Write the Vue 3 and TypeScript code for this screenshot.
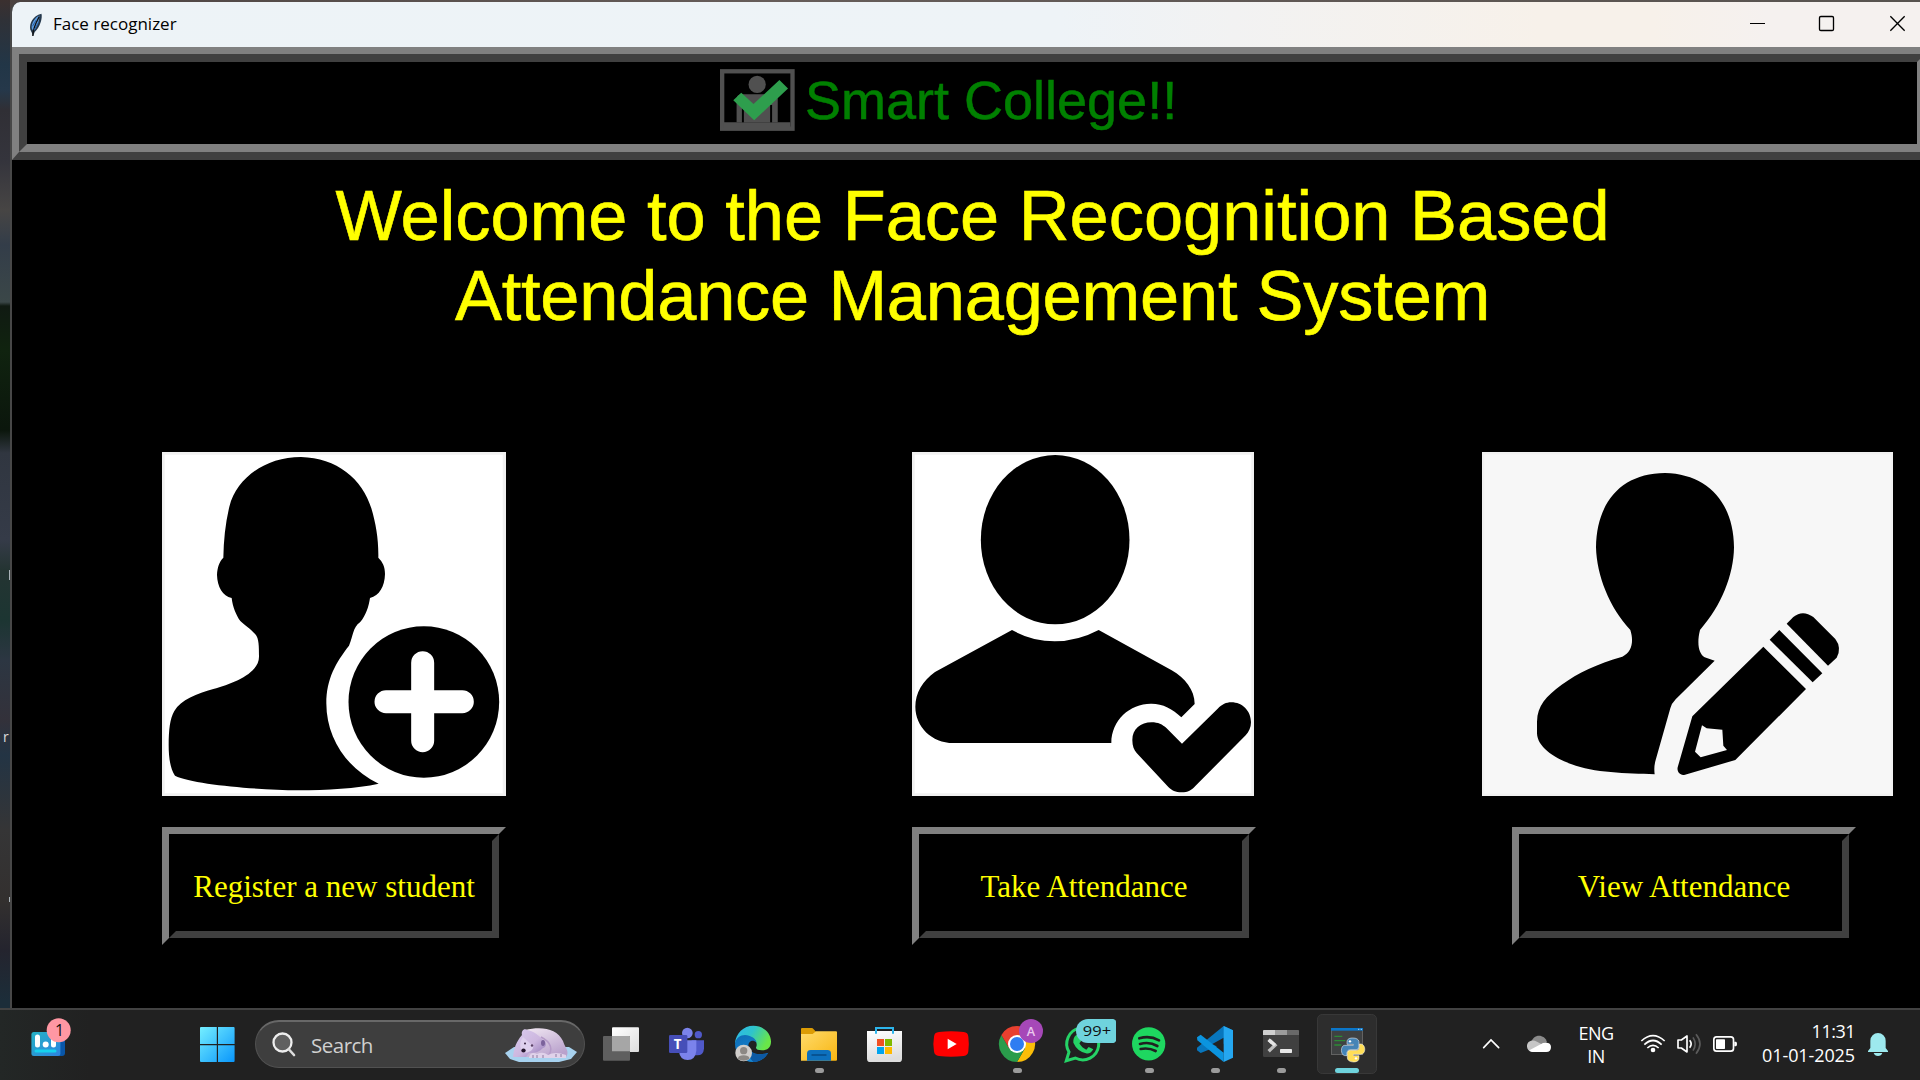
<script setup lang="ts">
interface TaskItem {
  id: string
  box: string
  running: boolean
}

const tasks: TaskItem[] = [
  { id: 'taskview', box: '-6 30 198 210', running: false },
  { id: 'teams', box: '192 30 198 210', running: false },
  { id: 'edge', box: '390 30 198 210', running: false },
  { id: 'files', box: '588 30 198 210', running: true },
  { id: 'store', box: '786 30 198 210', running: false },
  { id: 'youtube', box: '984 30 198 210', running: false },
  { id: 'chrome', box: '-48 30 198 210', running: true },
  { id: 'whatsapp', box: '150 30 198 210', running: false },
  { id: 'spotify', box: '348 30 198 210', running: true },
  { id: 'vscode', box: '546 30 198 210', running: true },
  { id: 'terminal', box: '744 30 198 210', running: true },
  { id: 'python', box: '942 30 198 210', running: false },
]
</script>

<template>
  <div class="screen">
    <div class="workspace">
      <aside class="desktop"><span class="d1"></span><span class="dr">r</span><span class="d2"></span></aside>
      <main class="window">
        <header class="titlebar">
          <svg class="feather" viewBox="84 28 50 80">
            <path d="M91 82C88 64 98 40 126 33C130 44 122 76 105 90L100 103L96 92Z" fill="#25384c" />
            <path d="M96 80C92 65 106 43 120 38C119 55 113 76 101 87Z" fill="#5d9ce0" />
            <path d="M99 102C99 84 107 64 119 42" fill="none" stroke="#111" stroke-width="4" />
            <path d="M98 72l12-20M103 84l14-24" stroke="#255b9f" stroke-width="3" />
          </svg>
          <span class="title">Face recognizer</span>
          <svg class="controls" viewBox="420 0 540 135">
            <path d="M450 64.5h45" stroke="#000" stroke-width="3" />
            <rect x="658.500" y="43.500" width="42" height="42" rx="4" fill="none" stroke="#000" stroke-width="4" />
            <path d="M871 43l43 43M914 43l-43 43" stroke="#000" stroke-width="4" />
          </svg>
        </header>

        <section class="banner">
          <div class="banner-in">
            <svg class="logo" viewBox="60 87 226 186">
              <rect x="66.500" y="93.500" width="212" height="173" fill="none" stroke="#505050" stroke-width="13" />
              <path d="M72 247H272V264H72z" fill="#505050" />
              <circle cx="172" cy="133" r="26" fill="#505050" />
              <path d="M110 247V178Q110 163 126 163H218Q234 163 234 178V247z" fill="#505050" />
              <path d="M129 195V247M214 195V247" stroke="#000" stroke-width="6" />
              <path d="M100 181L124 158L161 192L239 120L265 145L163 241Z" fill="#2e9e4d" />
            </svg>
            <span>Smart College!!</span>
          </div>
        </section>

        <h1>Welcome to the Face Recognition Based<br /><span class="second">Attendance Management System</span></h1>

        <section class="choices">
          <div class="choice">
            <svg class="art" width="344" height="344" viewBox="36 36 1032 1032">
              <rect x="36" y="36" width="1032" height="1032" fill="#f1f1f1" />
              <rect x="44" y="44" width="1014" height="1016" fill="#fff" />
              <path d="M453 51C560 54 637 116 664 205C678 252 686 300 685 353C698 366 705 380 705 402C704 440 688 467 660 474C656 500 648 526 630 547C608 562 610 588 597 617C558 667 529 716 529 790C529 895 590 985 686 1031C620 1045 530 1051 445 1051C320 1049 130 1034 75 1007C60 985 56 950 56 915C56 870 60 835 73 813C92 780 142 760 190 747C250 730 327 700 327 650C327 620 327 595 316 583C300 565 284 556 271 543C258 525 248 500 245 474C218 469 202 440 201 405C202 382 208 365 220 353C221 300 226 250 238 200C260 115 345 51 453 51Z" />
              <ellipse cx="821.500" cy="786" rx="226" ry="227" />
              <path d="M818 668V902M708 785H937" stroke="#fff" stroke-width="69" stroke-linecap="round" />
            </svg>
            <button class="action" type="button"><span>Register a new student</span></button>
          </div>
          <div class="choice">
            <svg class="art" width="342" height="344" viewBox="36 36 1026 1032">
              <rect x="36" y="36" width="1026" height="1032" fill="#f1f1f1" />
              <rect x="44" y="44" width="1010" height="1016" fill="#fff" />
              <ellipse cx="465.500" cy="299" rx="223" ry="254" />
              <path d="M336 570Q396 604 464 604Q532 604 596 570L815 691C855 714 884 750 884 792L844 832C818 806 786 790 752 791C690 791 634 840 634 909H160C95 909 46 860 46 800C46 760 68 722 105 696Z" />
              <path d="M697 900C697 867 722 847 755 847C774 847 787 853 800 865L846 911L953 806C967 793 978 787 994 787C1027 787 1053 813 1053 847C1053 863 1047 875 1037 886L886 1038C875 1050 864 1057 845 1057C826 1057 816 1051 805 1041L710 939C702 930 697 918 697 900Z" />
            </svg>
            <button class="action" type="button"><span>Take Attendance</span></button>
          </div>
          <div class="choice wide">
            <svg class="art" width="411" height="344" viewBox="36 36 1233 1032">
              <rect x="36" y="36" width="1234" height="1032" fill="#f1f1f1" />
              <rect x="43" y="43" width="1219" height="1018" fill="#f7f7f7" />
              <path d="M585 99C715 102 791 190 792 322C791 405 754 498 690 570C680 610 686 640 704 652L734 662L617 778Q605 790 601 805L557 960Q551 980 554 1003C470 1001 370 998 305 973C250 953 202 920 201 880V845C202 795 228 770 275 734C325 698 380 672 457 650C486 635 492 605 481 570C418 503 380 405 378 322C380 185 455 100 585 99Z" />
              <path d="M880 620L1008 747L796 960L645 1004C631 1008 620 996 623 982L667 829ZM696 856L675 935L692 952L771 930L760 917L757 869L710 865Z" fill-rule="evenodd" />
              <path d="M928 570L1057 700L1028 727L899 599Z" />
              <path d="M950 551L970 531Q998 508 1030 531L1096 597Q1116 624 1100 653L1074 677Z" />
            </svg>
            <button class="action" type="button"><span>View Attendance</span></button>
          </div>
        </section>
      </main>
    </div>

    <footer class="taskbar">
      <svg class="widget" width="100" height="70" viewBox="0 1010 100 70">
        <defs>
          <linearGradient id="wg" x2="1" y2="1"><stop stop-color="#25b2c5" /><stop offset="1" stop-color="#2e83e0" /></linearGradient>
        </defs>
        <rect x="52" y="1033" width="13" height="23" rx="3" fill="#0956a8" />
        <rect x="31.400" y="1032" width="29" height="24" rx="2.500" fill="url(#wg)" />
        <path d="M37.500 1037V1045M53.500 1039V1045" stroke="#fff" stroke-width="5" stroke-linecap="round" />
        <circle cx="45.700" cy="1044.500" r="3" fill="#fff" />
        <path d="M36 1051H55" stroke="#15d2ee" stroke-width="3" stroke-linecap="round" />
        <circle cx="58.700" cy="1030.300" r="12" fill="#ff97a3" />
        <text x="59.500" y="1036" text-anchor="middle" class="badge-num">1</text>
      </svg>
      <svg class="start" width="66" height="70" viewBox="184 1010 66 70">
        <defs><linearGradient id="win" x2="1" y2="1"><stop stop-color="#75efff" /><stop offset="1" stop-color="#0996fb" /></linearGradient></defs>
        <path d="M200 1028q0-1 1-1h15.800v17H200zM218 1027h15.600q1 0 1 1v16H218zM200 1045.200h16.800V1062H201q-1 0-1-1zM218 1045.200h16.600V1061q0 1-1 1H218z" fill="url(#win)" />
      </svg>
      <div class="search">
        <svg class="glass" width="24" height="26" viewBox="0 0 24 26"><circle cx="10.500" cy="10.500" r="9" fill="#606060" stroke="#eee" stroke-width="2.300" /><path d="M17 17.500L22 23" stroke="#ddd" stroke-width="2.600" stroke-linecap="round" /></svg>
        <span class="search-label">Search</span>
        <svg class="bear" width="72" height="34" viewBox="0 0 72 34">
          <defs><linearGradient id="fur" x2="1" y2="1"><stop stop-color="#d9cbef" /><stop offset=".55" stop-color="#cdb7df" /><stop offset="1" stop-color="#8e74b5" /></linearGradient>
            <linearGradient id="body" x2=".7" y2="1"><stop stop-color="#f6eef6" /><stop offset="1" stop-color="#b9a1cc" /></linearGradient></defs>
          <path d="M0 25L9 19H64L72 24L66 31L54 34H14L5 31Z" fill="#a8d2ef" />
          <path d="M20 2C36-2 52 0 58 13C60 20 65 23 61 29H12Z" fill="url(#body)" />
          <path d="M8 29C9 20 11 14 17 7C16 3 19 0 22 2C28 3 34 7 38 12C42 13 42 19 38 20C34 24 31 25 24 25L21 29Z" fill="url(#fur)" />
          <path d="M18 9C14 14 15 20 17 24C23 26 29 22 28 18" fill="#ded0ee" />
          <path d="M36 9C46 14 49 22 42 29" fill="none" stroke="#b59bc8" stroke-width="1.500" />
          <ellipse cx="18.500" cy="22.500" rx="2.200" ry="2" fill="#24152d" />
          <circle cx="20" cy="15.500" r="1" fill="#37243f" /><circle cx="27" cy="17.500" r="1.200" fill="#5b4266" />
          <ellipse cx="38" cy="15" rx="2" ry="3" fill="#7b629b" />
          <path d="M24 29Q26 23 32 26Q38 23 43 27Q50 23 61 27V30H24z" fill="#e0d2ea" />
          <path d="M28 27v3M32 27v3M38 27v3M51 26v3M56 26v3" stroke="#7a6590" stroke-width=".8" />
        </svg>
      </div>

      <nav class="tasks">
        <div v-for="t in tasks" :key="t.id" class="task">
          <svg width="66" height="70" :viewBox="t.box">
            <g v-if="t.id === 'taskview'">
              <defs><linearGradient id="tv" x2="1" y2="1"><stop stop-color="#fff" /><stop offset="1" stop-color="#ddd" /></linearGradient></defs>
              <rect x="66" y="82" width="81" height="74" rx="3" fill="url(#tv)" />
              <rect x="39" y="108" width="81" height="74" rx="3" fill="#5f5f5f" />
              <path d="M66 108H117Q120 108 120 111V154H66z" fill="#a6a6a6" />
            </g>
            <g v-else-if="t.id === 'teams'">
              <circle cx="325" cy="104" r="11" fill="#5059c9" />
              <path d="M305 121H342V146Q340 166 322 166H305z" fill="#5059c9" />
              <circle cx="292" cy="99" r="16" fill="#7b83eb" />
              <path d="M267 121H319V152Q316 180 293 180T267 155z" fill="#7b83eb" />
              <rect x="237" y="105" width="55" height="54" rx="4" fill="#464eb8" />
              <text x="263" y="147" text-anchor="middle" class="teams-t">T</text>
            </g>
            <g v-else-if="t.id === 'edge'">
              <defs>
                <linearGradient id="eg1" x2="1" y2=".4"><stop stop-color="#2db8ed" /><stop offset=".5" stop-color="#2fc4cb" /><stop offset="1" stop-color="#69e648" /></linearGradient>
                <linearGradient id="eg2" x2=".6" y2="1"><stop stop-color="#0f6cb5" /><stop offset="1" stop-color="#168bd8" /></linearGradient>
              </defs>
              <path d="M435 130C437 100 461 77 490 77C520 77 543 99 543 125C543 142 532 151 516 151C503 151 495 147 499 140C503 130 496 117 482 112Q455 106 435 130Z" fill="url(#eg1)" />
              <path d="M435 132C438 108 460 101 477 107C493 112 499 121 500 128C488 116 475 124 475 137C475 160 502 169 535 158C522 178 506 186 489 186C459 186 435 162 435 132Z" fill="url(#eg2)" />
              <path d="M476 130C472 160 503 169 535 158C524 177 507 186 490 186C480 176 471 156 476 130Z" fill="#0c59a4" />
              <circle cx="461" cy="159" r="25" fill="#d1cecb" />
              <circle cx="461" cy="152" r="11" fill="#8c8884" />
              <path d="M444 177V174Q446 166 461 166T478 174V177Q461 188 444 177Z" fill="#8c8884" />
            </g>
            <g v-else-if="t.id === 'files'">
              <defs><linearGradient id="fo" x2="1" y2="1"><stop stop-color="#ffdb6b" /><stop offset="1" stop-color="#f8b511" /></linearGradient></defs>
              <path d="M633 87Q633 84 636 84H665Q668 84 671 88L678 95V110H633z" fill="#dc9c05" />
              <path d="M633 102H668L678 94H738Q741 94 741 97V179Q741 182 738 182H633z" fill="url(#fo)" />
              <path d="M651 182V160Q652 150 662 150H713Q722 150 723 160V182z" fill="#0d70bd" />
              <path d="M666 165H708" stroke="#064985" stroke-width="4" stroke-linecap="round" />
            </g>
            <g v-else-if="t.id === 'store'">
              <defs><linearGradient id="st" y2="1" x2=".2"><stop stop-color="#fff" /><stop offset="1" stop-color="#ddd" /></linearGradient></defs>
              <path d="M831 93H936V176Q936 186 926 186H841Q831 186 831 176z" fill="url(#st)" />
              <path d="M858 101V84H909V101" fill="none" stroke="#2cb5ec" stroke-width="6" />
              <path d="M861 117h21v21h-21z" fill="#f25022" /><path d="M885 117h21v21h-21z" fill="#7fba00" />
              <path d="M861 141h21v21h-21z" fill="#00a4ef" /><path d="M885 141h21v21h-21z" fill="#ffb900" />
            </g>
            <g v-else-if="t.id === 'youtube'">
              <path d="M1047 96Q1083 92 1121 96Q1134 97 1135 110Q1138 132 1135 154Q1134 167 1121 168Q1083 172 1047 168Q1033 167 1032 154Q1028 132 1032 110Q1033 97 1047 96Z" fill="#f00" />
              <path d="M1073 116V148L1100 132Z" fill="#fff" />
            </g>
            <g v-else-if="t.id === 'chrome'">
              <path d="M51 132L74.400 145.500L51 186A54 54 0 0 0 97.800 105H51Z" fill="#fbbd08" />
              <path d="M51 132L27.600 145.500L4.200 105A54 54 0 0 0 51 186L74.400 145.500Z" fill="#2a9c4b" />
              <path d="M27.600 145.500L4.200 105A54 54 0 0 1 97.800 105H51Z" fill="#e8402f" />
              <circle cx="51" cy="132" r="27" fill="#fff" /><circle cx="51" cy="132" r="21" fill="#2f7df2" />
              <circle cx="93" cy="93" r="36" fill="#a648b8" />
              <text x="93" y="107" text-anchor="middle" class="avatar-a">A</text>
            </g>
            <g v-else-if="t.id === 'whatsapp'">
              <path d="M199 182L207 156A48 48 0 1 1 226 174Z" fill="none" stroke="#25d366" stroke-width="9" />
              <path d="M230 106Q237 101 242 112L246 122L240 130Q248 144 261 149L268 141L282 148Q273 163 260 160Q233 153 222 128Q221 113 230 106Z" fill="#25d366" transform="translate(-2 0)" />
              <path d="M264 57H340Q348 59 348 64V122Q346 129 336 129H264A36 36 0 0 1 264 57Z" fill="#6fd3dd" />
              <text x="291" y="109" text-anchor="middle" textLength="85" lengthAdjust="spacingAndGlyphs" class="badge-big">99+</text>
            </g>
            <g v-else-if="t.id === 'spotify'">
              <circle cx="446" cy="131.500" r="50" fill="#1ed760" />
              <path d="M418 115Q450 106 477 121M420 132Q448 124 472 138M422 147Q446 142 467 153" fill="none" stroke="#202020" stroke-width="8" stroke-linecap="round" />
            </g>
            <g v-else-if="t.id === 'vscode'">
              <path d="M671 78L699 91V120L602 159L591 151V143Z" fill="#0876bd" />
              <path d="M591 112L602 104L671 158V186L592 121Z" fill="#0b94df" />
              <path d="M671 113L637 132L671 151Z" fill="#222" />
              <path d="M671 78L699 91V173L671 186Z" fill="#25a7f0" />
            </g>
            <g v-else-if="t.id === 'terminal'">
              <rect x="789" y="90" width="108" height="81" rx="4" fill="#404040" />
              <path d="M789 105V93Q789 90 792 90H825V105z" fill="#cfcfcf" /><path d="M825 90H861V105H825z" fill="#9c9c9c" /><path d="M861 90H894Q897 90 897 93V105H861z" fill="#696969" />
              <path d="M806 119L825 136L806 154" fill="none" stroke="#bdbdbd" stroke-width="10" />
              <path d="M806 119L825 136" stroke="#e4e4e4" stroke-width="10" />
              <rect x="840" y="147" width="36" height="12" rx="2" fill="#e8e8e8" />
            </g>
            <g v-else>
              <rect x="952.500" y="43.500" width="177" height="177" rx="14" fill="#2d2d2d" stroke="#383838" stroke-width="3" />
              <rect x="994.500" y="85.500" width="93" height="78" fill="#3f4142" stroke="#626262" stroke-width="3" />
              <path d="M993 84H1089V92H993z" fill="#0b76c8" />
              <path d="M1074 88h4m4 0h4" stroke="#8fc5ea" stroke-width="4" />
              <path d="M1003 109H1027M1003 122H1036M1003 135H1024" stroke="#2c8a35" stroke-width="4" />
              <g stroke="#fff" stroke-width="1.500">
                <path d="M1058 114C1044 114 1041 120 1041 127V133H1060V136H1034C1021 136 1021 165 1034 167H1041V157Q1042 149 1051 149H1069Q1077 148 1077 140V125Q1075 114 1058 114Z" fill="#4584b6" />
                <path d="M1060 186C1074 186 1077 180 1077 173V167H1060V163H1083C1098 162 1098 135 1084 132H1078V143Q1077 151 1068 151H1050Q1042 152 1042 160V174Q1043 185 1060 186Z" fill="#ffde57" />
              </g>
              <circle cx="1050" cy="124" r="3.500" fill="#fff" /><circle cx="1068" cy="175" r="3.500" fill="#fff" />
              <rect x="1005" y="204" width="72" height="15" rx="7.500" fill="#6fd3dd" />
            </g>
          </svg>
          <i v-if="t.running" class="dot"></i>
        </div>
      </nav>

      <div class="tray">
        <svg width="48" height="70" viewBox="51 30 144 210"><path d="M101 143L123 120L146 143" fill="none" stroke="#fff" stroke-width="5" stroke-linecap="round" /></svg>
        <svg width="48" height="70" viewBox="195 30 144 210">
          <path d="M245 128C247 102 284 100 291 127L267 140Z" fill="#8b8b8b" />
          <path d="M231 140C230 122 248 117 261 125L281 136L245 156Q232 151 231 140Z" fill="#c6c6c6" />
          <path d="M238 151L279 129Q303 125 303 141T287 156H247Q240 155 238 151Z" fill="#fff" />
        </svg>
        <div class="lang">ENG<br />IN</div>
        <svg class="status" width="108" height="70" viewBox="555 30 324 210">
          <g fill="none" stroke="#fff" stroke-width="5">
            <path d="M574 123Q609 91 644 123" /><path d="M583 134Q609 109 635 134" /><path d="M592 144Q609 128 626 144" />
            <path d="M684 120H694L711 108V156L694 144H684Z" stroke-linejoin="round" />
            <path d="M719 121Q728 132 719 143" />
            <path d="M729 112Q742 132 729 152M738 103Q762 132 738 161" stroke="#5b5b5b" />
            <rect x="791.500" y="110.500" width="59" height="43" rx="8" />
          </g>
          <circle cx="609" cy="150" r="7" fill="#fff" />
          <rect x="798" y="118" width="27" height="29" rx="2" fill="#fff" />
          <path d="M853 125H858Q861 126 861 132T858 139H853z" fill="#fff" />
        </svg>
        <div class="clock"><span class="time">11:31</span><span class="date">01-01-2025</span></div>
        <svg width="65" height="70" viewBox="1215 30 195 210"><path d="M1261 144V122A23 23 0 0 1 1307 122V144L1314 153V156H1254V153Z" fill="#9de9ee" /><path d="M1271 159H1297Q1294 168 1284 168T1271 159Z" fill="#9de9ee" /></svg>
      </div>
    </footer>
  </div>
</template>

<style>
body { margin: 0; overflow: hidden; background: #000; }
</style>

<style scoped>
.screen { width: 1920px; height: 1080px; overflow: hidden; display: flex; flex-direction: column; background: #000; font-family: "Open Sans", "Noto Sans", sans-serif; }
.workspace { height: 1008px; display: flex; background: linear-gradient(90deg, #4b4240, #665c59 40%, #57534f); }
.desktop { position: relative; width: 10px; flex: none; background: linear-gradient(#3b302f 0, #2f3137 20px, #223647 65px, #25384a 90px, #302f35 110px, #34343c 160px, #474544 210px, #333d49 245px, #3b4748 302px, #101a12 306px, #10230f 350px, #0b160c 430px, #303640 453px, #353b48 540px, #243432 570px, #1c3532 620px, #2c3642 660px, #33313a 720px, #233444 755px, #353536 830px, #33302f 900px, #24242e 950px, #1c2d39 1000px); }
.dr { position: absolute; left: 3px; top: 728px; font-size: 14px; line-height: 18px; color: #ddd; }
.d1, .d2 { position: absolute; right: 0; width: 1px; background: #a9b2b8; }
.d1 { top: 570px; height: 10px; }
.d2 { top: 897px; height: 5px; }
.window { box-sizing: border-box; width: 1910px; height: 1006px; margin-top: 2px; border-left: 2px solid #474747; border-radius: 10px 0 0 0; overflow: hidden; background: #000; display: flex; flex-direction: column; }
.titlebar { height: 45px; flex: none; display: flex; align-items: center; background: linear-gradient(90deg, #edf3f7 0, #eef3f7 55%, #f2f2f2 64%, #f7f1ea 80%, #f7f1ea 86%, #f5f1ef 92%); }
.feather { width: 16px; height: 26px; margin-left: 16px; }
.title { margin: -2px 0 0 9px; font-size: 17px; color: #000; flex: 1; line-height: 24px; }
.controls { width: 180px; height: 45px; }
.banner { box-sizing: border-box; width: 1921px; height: 113px; flex: none; border-style: solid; border-width: 7px 8px 8px 7px; border-color: #808080 #404040 #404040 #808080; }
.banner-in { box-sizing: border-box; height: 98px; border: 8px solid; border-color: #404040 #808080 #808080 #404040; display: flex; padding-left: 693px; font: 54px/62px "Liberation Sans", Arial, sans-serif; color: #008000; }
.banner-in span { margin-left: 10px; margin-top: 7px; white-space: nowrap; -webkit-text-stroke: 0.5px #008000; }
.logo { width: 75px; height: 62px; margin-top: 7px; flex: none; }
h1 { margin: 16px 0 0; height: 160px; width: 1921px; text-align: center; font: 400 70.4px/80px "Liberation Sans", Arial, sans-serif; color: #ff0; white-space: nowrap; -webkit-text-stroke: 0.6px #ff0; }
.second { letter-spacing: -0.2px; }
.choices { display: flex; margin-top: 116px; padding-left: 150px; }
.choice { width: 344px; margin-right: 406px; flex: none; display: flex; flex-direction: column; align-items: flex-start; }
.choice:nth-child(2) { margin-right: 226px; }
.choice.wide { width: 411px; margin: 0; }
.wide .action { margin-left: 30px; }
.art { display: block; }
.action { box-sizing: border-box; width: 344px; height: 118px; margin: 31px 0 0; padding: 0; background: #000; border: 7px solid; border-color: #808080 #000 #000 #808080; display: flex; }
.action span { box-sizing: border-box; width: 100%; height: 104px; border: 7px solid; border-color: #000 #404040 #404040 #000; display: block; text-align: center; font: 31px/92px "Liberation Serif", "Times New Roman", serif; color: #ff0; }
.taskbar { box-sizing: border-box; height: 72px; border-top: 2px solid #424242; background: linear-gradient(90deg, #232726, #212121 90px); display: flex; }
.taskbar svg { display: block; flex: none; }
.start { margin-left: 84px; }
.search { box-sizing: border-box; width: 330px; height: 48px; margin: 10px 3px 0 5px; border: 1.5px solid #515151; border-top: 2px solid #686868; border-radius: 24px; background: #3e3e3e; display: flex; align-items: center; padding-left: 16px; }
.search-label { flex: 1; margin-left: 15px; font-size: 20.500px; letter-spacing: -0.5px; color: #d0d0d0; line-height: 28px; }
.bear { margin-right: 7px; }
.tasks { display: flex; }
.task { position: relative; width: 66px; height: 70px; }
.dot { position: absolute; left: 29px; top: 58px; width: 9px; height: 5px; border-radius: 3px; background: #9b9b9b; }
.badge-num { font-size: 16px; fill: #111; }
.badge-big { font-size: 46px; fill: #111; }
.teams-t { font-size: 40px; font-weight: 700; fill: #fff; }
.avatar-a { font-size: 38px; font-weight: 600; fill: #eac7ee; }
.tray { margin-left: 87px; display: flex; color: #fff; font-size: 18px; line-height: 23px; }
.lang { width: 66px; text-align: center; padding-top: 12px; letter-spacing: -0.5px; }
.status { margin-left: 6px; }
.clock { width: 112px; padding-top: 9px; display: flex; flex-direction: column; align-items: flex-end; white-space: nowrap; line-height: 24px; }
.time { letter-spacing: -0.5px; }
.date { letter-spacing: -0.1px; }
</style>
